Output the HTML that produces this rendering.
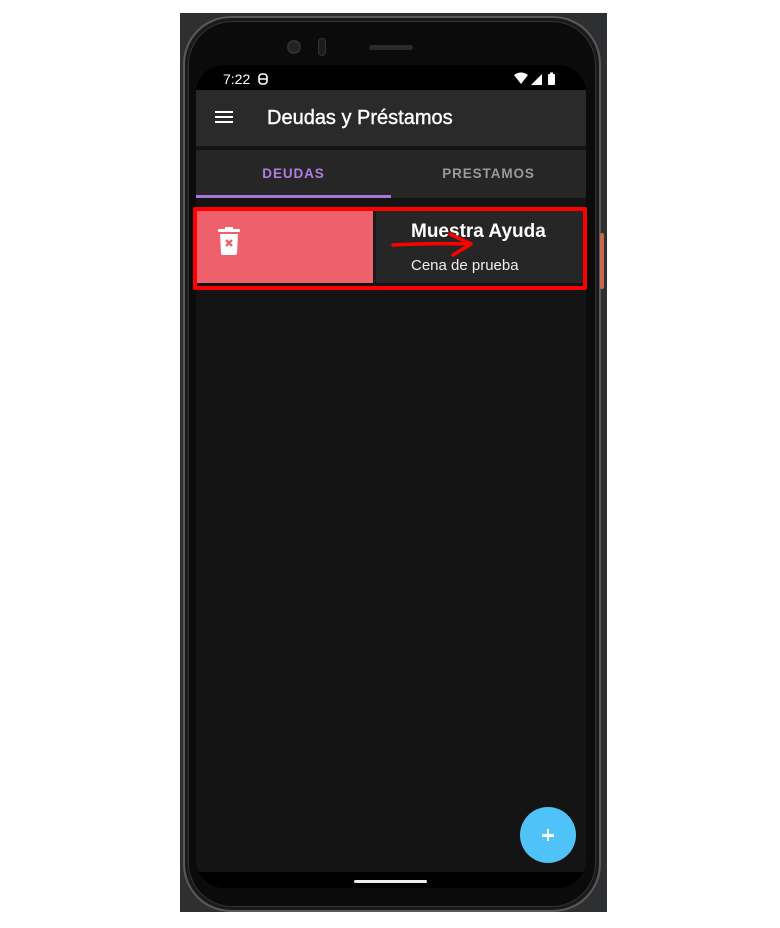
<!DOCTYPE html>
<html><head><meta charset="utf-8"><style>
*{margin:0;padding:0;box-sizing:border-box}
body{width:780px;height:928px;background:#fff;position:relative;overflow:hidden;font-family:"Liberation Sans",Roboto,sans-serif}
.abs{position:absolute}
</style></head><body>
<div class="abs" style="left:180px;top:13px;width:427px;height:899px;background:#2e2f30"></div>
<div class="abs" style="left:183px;top:16px;width:418px;height:896px;border-radius:48px;background:#1a1a1a;border:2px solid #5a5a5a"></div>
<div class="abs" style="left:188px;top:21px;width:408px;height:886px;border-radius:44px;background:#0b0b0b;border:1px solid #333"></div>
<div class="abs" style="left:287px;top:40px;width:14px;height:14px;border-radius:50%;background:#222;border:2px solid #2f2f2f"></div>
<div class="abs" style="left:318px;top:38px;width:8px;height:18px;border-radius:4px;background:#1c1c1c;border:1px solid #333"></div>
<div class="abs" style="left:369px;top:45px;width:44px;height:5px;border-radius:3px;background:#2a2a2a"></div>
<div class="abs" style="left:600px;top:233px;width:4px;height:56px;border-radius:2px;background:#c9684f"></div>
<div class="abs" style="left:196px;top:65px;width:390px;height:823px;border-radius:28px;background:#000;overflow:hidden">
  <div class="abs" style="left:27px;top:6px;color:#fff;font-size:14px">7:22</div>
  <svg class="abs" style="left:62px;top:8px" width="10" height="12" viewBox="0 0 10 12"><rect x="1" y="1" width="8" height="10" rx="3" fill="none" stroke="#fff" stroke-width="1.6"/><line x1="1" y1="6" x2="9" y2="6" stroke="#fff" stroke-width="1.4"/></svg>
  <svg class="abs" style="left:318px;top:7px" width="50" height="14" viewBox="0 0 50 14"><path d="M0 3 Q7 -2 14 3 L7 12 Z" fill="#fff"/><path d="M17 13 L28 2 L28 13 Z" fill="#fff"/><rect x="34" y="2" width="7" height="11" rx="1" fill="#fff"/><rect x="36" y="0.5" width="3" height="2" fill="#fff"/></svg>
  <div class="abs" style="left:0;top:25px;width:390px;height:782px;background:#141414"></div>
  <div class="abs" style="left:0;top:25px;width:390px;height:56px;background:#2a2a2a"></div>
  <div class="abs" style="left:19px;top:46px;width:18px;height:2px;background:#fff;box-shadow:0 5px 0 #fff,0 10px 0 #fff"></div>
  <div class="abs" style="left:71px;top:42px;color:#fff;font-size:20px;font-weight:500;-webkit-text-stroke:0.4px #fff">Deudas y Préstamos</div>
  <div class="abs" style="left:0;top:85px;width:390px;height:48px;background:#262626"></div>
  <div class="abs" style="left:0;top:85px;width:195px;height:48px;line-height:48px;text-align:center;color:#b27de0;font-size:13.5px;font-weight:bold;letter-spacing:0.9px">DEUDAS</div>
  <div class="abs" style="left:195px;top:85px;width:195px;height:48px;line-height:48px;text-align:center;color:#9a9a9a;font-size:13.5px;font-weight:bold;letter-spacing:0.9px">PRESTAMOS</div>
  <div class="abs" style="left:0;top:130px;width:195px;height:3px;background:#a876da"></div>
  <div class="abs" style="left:0;top:145px;width:177px;height:73px;background:#ef606d"></div>
  <svg class="abs" style="left:22px;top:162px" width="22" height="28" viewBox="0 0 22 28"><rect x="0" y="2" width="22" height="3" rx="1" fill="#fff"/><rect x="7" y="0" width="8" height="3" fill="#fff"/><path d="M2 7 H20 L19 26 Q19 28 17 28 H5 Q3 28 3 26 Z" fill="#fff"/><path d="M8 13 L14 19 M14 13 L8 19" stroke="#ef606d" stroke-width="2.4"/></svg>
  <div class="abs" style="left:177px;top:145px;width:213px;height:73px;background:#262626;border-left:3px solid #1a1a1a"></div>
  <div class="abs" style="left:215px;top:156px;color:#fff;font-size:19px;font-weight:bold">Muestra Ayuda</div>
  <div class="abs" style="left:215px;top:192px;color:#eee;font-size:15px">Cena de prueba</div>
  <div class="abs" style="left:324px;top:742px;width:56px;height:56px;border-radius:50%;background:#4fc3f7"></div>
  <div class="abs" style="left:346px;top:769px;width:12px;height:2.6px;background:#fff"></div>
  <div class="abs" style="left:350.7px;top:764px;width:2.6px;height:12px;background:#fff"></div>
  <div class="abs" style="left:158px;top:815px;width:73px;height:3px;border-radius:2px;background:#eee"></div>
</div>
<div class="abs" style="left:193px;top:207px;width:394px;height:83px;border:4px solid #f00;border-radius:2px"></div>
<svg class="abs" style="left:390px;top:228px" width="90" height="30" viewBox="0 0 90 30"><path d="M3 17 Q40 15 80 16" stroke="#f00" stroke-width="3.5" fill="none" stroke-linecap="round"/><path d="M60 6 L81 16 L63 27" stroke="#f00" stroke-width="3.5" fill="none" stroke-linecap="round" stroke-linejoin="round"/></svg>
</body></html>
